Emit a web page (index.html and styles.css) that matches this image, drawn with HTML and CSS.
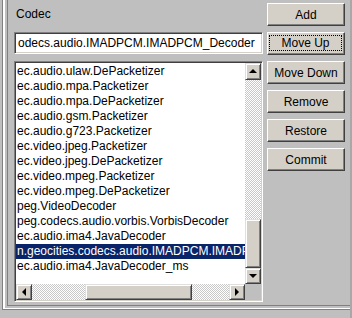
FILE: index.html
```html
<!DOCTYPE html>
<html lang="en">
<head>
    <meta charset="UTF-8">
    <title>Codec</title>
    <link rel="stylesheet" href="styles.css">
</head>
<body>
<div class="frame">
  <div class="edge-a">
    <div class="edge-b">
      <div class="edge-c">
        <div class="pane">
          <div class="left">
            <div class="label">Codec</div>
            <div class="field"><span>odecs.audio.IMADPCM.IMADPCM_Decoder</span></div>
            <div class="list">
              <div class="view">
                <div class="rows">
                  <div class="row">ec.audio.ulaw.DePacketizer</div>
                  <div class="row">ec.audio.mpa.Packetizer</div>
                  <div class="row">ec.audio.mpa.DePacketizer</div>
                  <div class="row">ec.audio.gsm.Packetizer</div>
                  <div class="row">ec.audio.g723.Packetizer</div>
                  <div class="row">ec.video.jpeg.Packetizer</div>
                  <div class="row">ec.video.jpeg.DePacketizer</div>
                  <div class="row">ec.video.mpeg.Packetizer</div>
                  <div class="row">ec.video.mpeg.DePacketizer</div>
                  <div class="row">peg.VideoDecoder</div>
                  <div class="row">peg.codecs.audio.vorbis.VorbisDecoder</div>
                  <div class="row">ec.audio.ima4.JavaDecoder</div>
                  <div class="row selected">n.geocities.codecs.audio.IMADPCM.IMADPCM_Decoder</div>
                  <div class="row">ec.audio.ima4.JavaDecoder_ms</div>
                </div>
                <div class="vbar">
                  <div class="arrow"><i class="tri up"></i></div>
                  <div class="track vtrack"><div class="thumb"></div></div>
                  <div class="arrow"><i class="tri down"></i></div>
                </div>
              </div>
              <div class="hbar">
                <div class="arrow"><i class="tri lt"></i></div>
                <div class="track htrack"><div class="thumb"></div></div>
                <div class="arrow"><i class="tri rt"></i></div>
                <div class="corner"></div>
              </div>
            </div>
          </div>
          <div class="buttons">
            <button class="btn">Add</button>
            <button class="btn focus"><span>Move Up</span></button>
            <button class="btn">Move Down</button>
            <button class="btn">Remove</button>
            <button class="btn">Restore</button>
            <button class="btn">Commit</button>
          </div>
        </div>
      </div>
    </div>
  </div>
</div>
</body>
</html>
```

FILE: styles.css
```css
body {
  margin: 0;
  background: #bfbfbf;
  font-family: "Liberation Sans", Arial, sans-serif;
  font-size: 12px;
  color: #000;
}

.frame {
  width: 352px;
  height: 318px;
  box-sizing: border-box;
  padding-left: 2px;
  border-right: 2px solid #a8a8a8;
  overflow: hidden;
}

.edge-a {
  height: 309px;
  border-left: 1px solid #808080;
  border-bottom: 1px solid #808080;
}

.edge-b {
  height: 308px;
  border-left: 2px solid #fff;
  border-bottom: 1px solid #fff;
}

.edge-c {
  height: 305px;
  margin-left: 2px;
  border-left: 1px solid #808080;
  border-bottom: 1px solid #808080;
}

.pane {
  display: flex;
  gap: 4px;
  padding: 3px 0 0 6px;
}

.left {
  width: 249px;
  display: flex;
  flex-direction: column;
}

.label {
  height: 29px;
  padding: 4px 0 0 2px;
  box-sizing: border-box;
  line-height: 15px;
}

.field {
  height: 22px;
  box-sizing: border-box;
  background: #fff;
  border-top: 1px solid #808080;
  border-left: 1px solid #808080;
  border-bottom: 1px solid #fff;
  border-right: 1px solid #fff;
  box-shadow: inset 1px 1px #404040, inset -1px -1px #d4d0c8;
  padding: 3px 0 0 3px;
  line-height: 15px;
  white-space: nowrap;
  overflow: hidden;
}

.list {
  margin-top: 7px;
  height: 241px;
  box-sizing: border-box;
  border-top: 1px solid #808080;
  border-left: 1px solid #808080;
  border-bottom: 1px solid #fff;
  border-right: 1px solid #fff;
  box-shadow: inset 1px 1px #404040, inset -1px -1px #d4d0c8;
  padding: 1px;
  display: flex;
  flex-direction: column;
}

.view {
  display: flex;
  height: 222px;
}

.rows {
  flex: 1;
  background: #fff;
  padding-top: 1px;
  overflow: hidden;
}

.row {
  height: 15px;
  line-height: 15px;
  padding-left: 1px;
  white-space: nowrap;
}

.row.selected {
  background: #0a246a;
  color: #fff;
}

.vbar {
  width: 16px;
  display: flex;
  flex-direction: column;
}

.hbar {
  height: 16px;
  display: flex;
}

.arrow {
  width: 16px;
  height: 16px;
  box-sizing: border-box;
  background: #d4d0c8;
  border-top: 1px solid #dfdfdf;
  border-left: 1px solid #dfdfdf;
  border-right: 1px solid #404040;
  border-bottom: 1px solid #404040;
  box-shadow: inset 1px 1px #fff, inset -1px -1px #808080;
  display: flex;
  align-items: center;
  justify-content: center;
}

.vbar .arrow:first-child {
  height: 17px;
}

.tri {
  width: 0;
  height: 0;
  border: 4px solid transparent;
}

.tri.up {
  border-bottom-color: #000;
  border-top-width: 0;
  margin-top: -1px;
}

.tri.down {
  border-top-color: #000;
  border-bottom-width: 0;
}

.tri.lt {
  border-right-color: #000;
  border-left-width: 0;
}

.tri.rt {
  border-left-color: #000;
  border-right-width: 0;
}

.track {
  flex: 1;
  background: repeating-conic-gradient(#fff 0 25%, #c8c8c8 0 50%) 0 0 / 2px 2px;
  display: flex;
}

.vtrack {
  flex-direction: column;
  justify-content: flex-end;
}

.vtrack .thumb {
  height: 49px;
}

.htrack .thumb {
  width: 107px;
  margin-left: 53px;
}

.thumb {
  box-sizing: border-box;
  background: #d4d0c8;
  border-top: 1px solid #dfdfdf;
  border-left: 1px solid #dfdfdf;
  border-right: 1px solid #404040;
  border-bottom: 1px solid #404040;
  box-shadow: inset 1px 1px #fff, inset -1px -1px #808080;
}

.corner {
  width: 16px;
  background: #bfbfbf;
}

.buttons {
  width: 78px;
  display: flex;
  flex-direction: column;
  gap: 6px;
}

.btn {
  height: 23px;
  box-sizing: border-box;
  margin: 0;
  padding: 0;
  font-family: inherit;
  font-size: 12px;
  color: #000;
  background: #d4d0c8;
  border-top: 1px solid #fff;
  border-left: 1px solid #fff;
  border-right: 1px solid #404040;
  border-bottom: 1px solid #404040;
  box-shadow: inset -1px -1px #808080;
}

.btn.focus span {
  display: block;
  margin: 2px 3px 3px 2px;
  line-height: 14px;
  outline: 1px dotted #000;
}
```
